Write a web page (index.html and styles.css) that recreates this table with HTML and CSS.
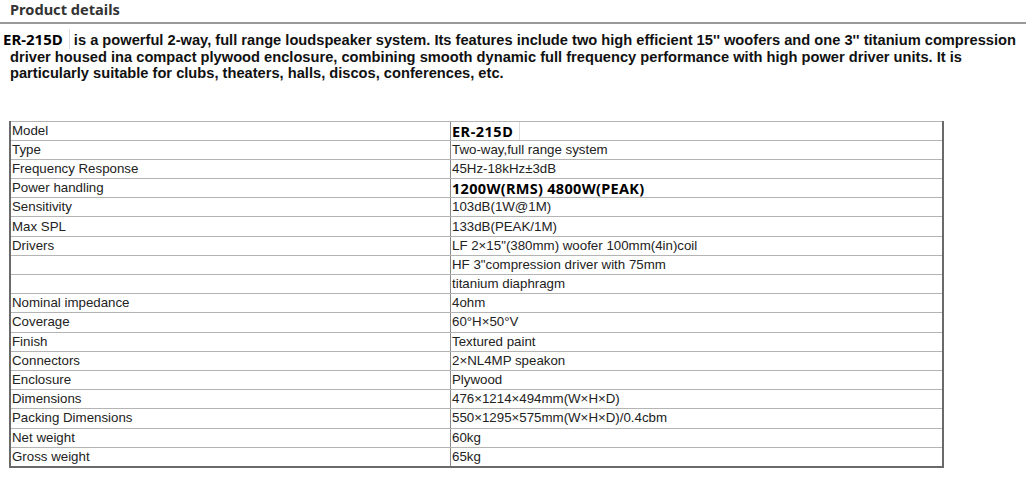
FILE: index.html
```html
<!DOCTYPE html>
<html>
<head>
<meta charset="utf-8">
<link rel="stylesheet" href="styles.css">
</head>
<body>
<div class="page">
  <h2 class="section-title">Product details</h2>
  <p class="intro"><span class="model-tag">ER-215D</span> is a powerful 2-way, full range loudspeaker system. Its features include two high efficient 15'' woofers and one 3'' titanium compression<br>driver housed ina compact plywood enclosure, combining smooth dynamic full frequency performance with high power driver units. It is<br>particularly suitable for clubs, theaters, halls, discos, conferences, etc.</p>
  <table class="specs">
    <tbody>
      <tr><td>Model</td><td><span class="model-cell">ER-215D</span></td></tr>
      <tr><td>Type</td><td>Two-way,full range system</td></tr>
      <tr><td>Frequency Response</td><td>45Hz-18kHz±3dB</td></tr>
      <tr><td>Power handling</td><td><span class="strong-val">1200W(RMS) 4800W(PEAK)</span></td></tr>
      <tr><td>Sensitivity</td><td>103dB(1W@1M)</td></tr>
      <tr><td>Max SPL</td><td>133dB(PEAK/1M)</td></tr>
      <tr><td>Drivers</td><td>LF 2×15"(380mm) woofer 100mm(4in)coil</td></tr>
      <tr><td></td><td>HF 3"compression driver with 75mm</td></tr>
      <tr><td></td><td>titanium diaphragm</td></tr>
      <tr><td>Nominal impedance</td><td>4ohm</td></tr>
      <tr><td>Coverage</td><td>60°H×50°V</td></tr>
      <tr><td>Finish</td><td>Textured paint</td></tr>
      <tr><td>Connectors</td><td>2×NL4MP speakon</td></tr>
      <tr><td>Enclosure</td><td>Plywood</td></tr>
      <tr><td>Dimensions</td><td>476×1214×494mm(W×H×D)</td></tr>
      <tr><td>Packing Dimensions</td><td>550×1295×575mm(W×H×D)/0.4cbm</td></tr>
      <tr><td>Net weight</td><td>60kg</td></tr>
      <tr><td>Gross weight</td><td>65kg</td></tr>
    </tbody>
  </table>
</div>
</body>
</html>
```
FILE: styles.css
```css
html, body {
  margin: 0;
  padding: 0;
  background: #fff;
}
.page {
  width: 1026px;
}
.section-title {
  margin: 0;
  padding: 0 0 0 10px;
  height: 22px;
  font-family: "Noto Sans", "Open Sans", sans-serif;
  font-weight: 700;
  font-size: 14.6px;
  line-height: 18px;
  color: #333;
  border-bottom: 2px solid #999;
}
.intro {
  margin: 7px 0 0 0;
  padding: 0 10px 0 10px;
  text-indent: -7px;
  font-family: "Liberation Sans", Arial, sans-serif;
  font-weight: 700;
  font-size: 14.67px;
  line-height: 16.5px;
  color: #111;
}
.model-tag {
  font-family: "Noto Sans", "Open Sans", sans-serif;
  font-weight: 700;
  font-size: 15px;
  color: #000;
  padding-right: 6px;
  border-right: 1px solid #ddd;
}
.specs {
  margin: 39px 0 0 9px;
  width: 935px;
  border-collapse: collapse;
  border-top: 1px solid #999;
  border-left: 2px solid #6a6a6a;
  border-right: 2px solid #6a6a6a;
  border-bottom: 2px solid #6a6a6a;
  font-family: "Liberation Sans", Arial, sans-serif;
  font-size: 13.3px;
  color: #222;
}
.specs td {
  height: 18.2px;
  padding: 0 0 0 1px;
  border-top: 1px solid #b4b4b4;
  border-bottom: 1px solid #b4b4b4;
  border-left: 1px solid #8a8a8a;
  line-height: 18px;
  vertical-align: middle;
  white-space: nowrap;
}
.specs td:first-child {
  width: 438px;
  border-left: none;
}
.model-cell {
  display: inline-block;
  vertical-align: top;
  line-height: 18px;
  font-family: "Noto Sans", "Open Sans", sans-serif;
  font-weight: 700;
  font-size: 14.5px;
  letter-spacing: 0.5px;
  color: #000;
  padding-right: 6px;
  border-right: 1px solid #ddd;
}
.strong-val {
  display: inline-block;
  vertical-align: top;
  line-height: 18px;
  font-family: "Noto Sans", "Open Sans", sans-serif;
  font-weight: 700;
  font-size: 14.5px;
  letter-spacing: 0.3px;
  color: #000;
}
```
